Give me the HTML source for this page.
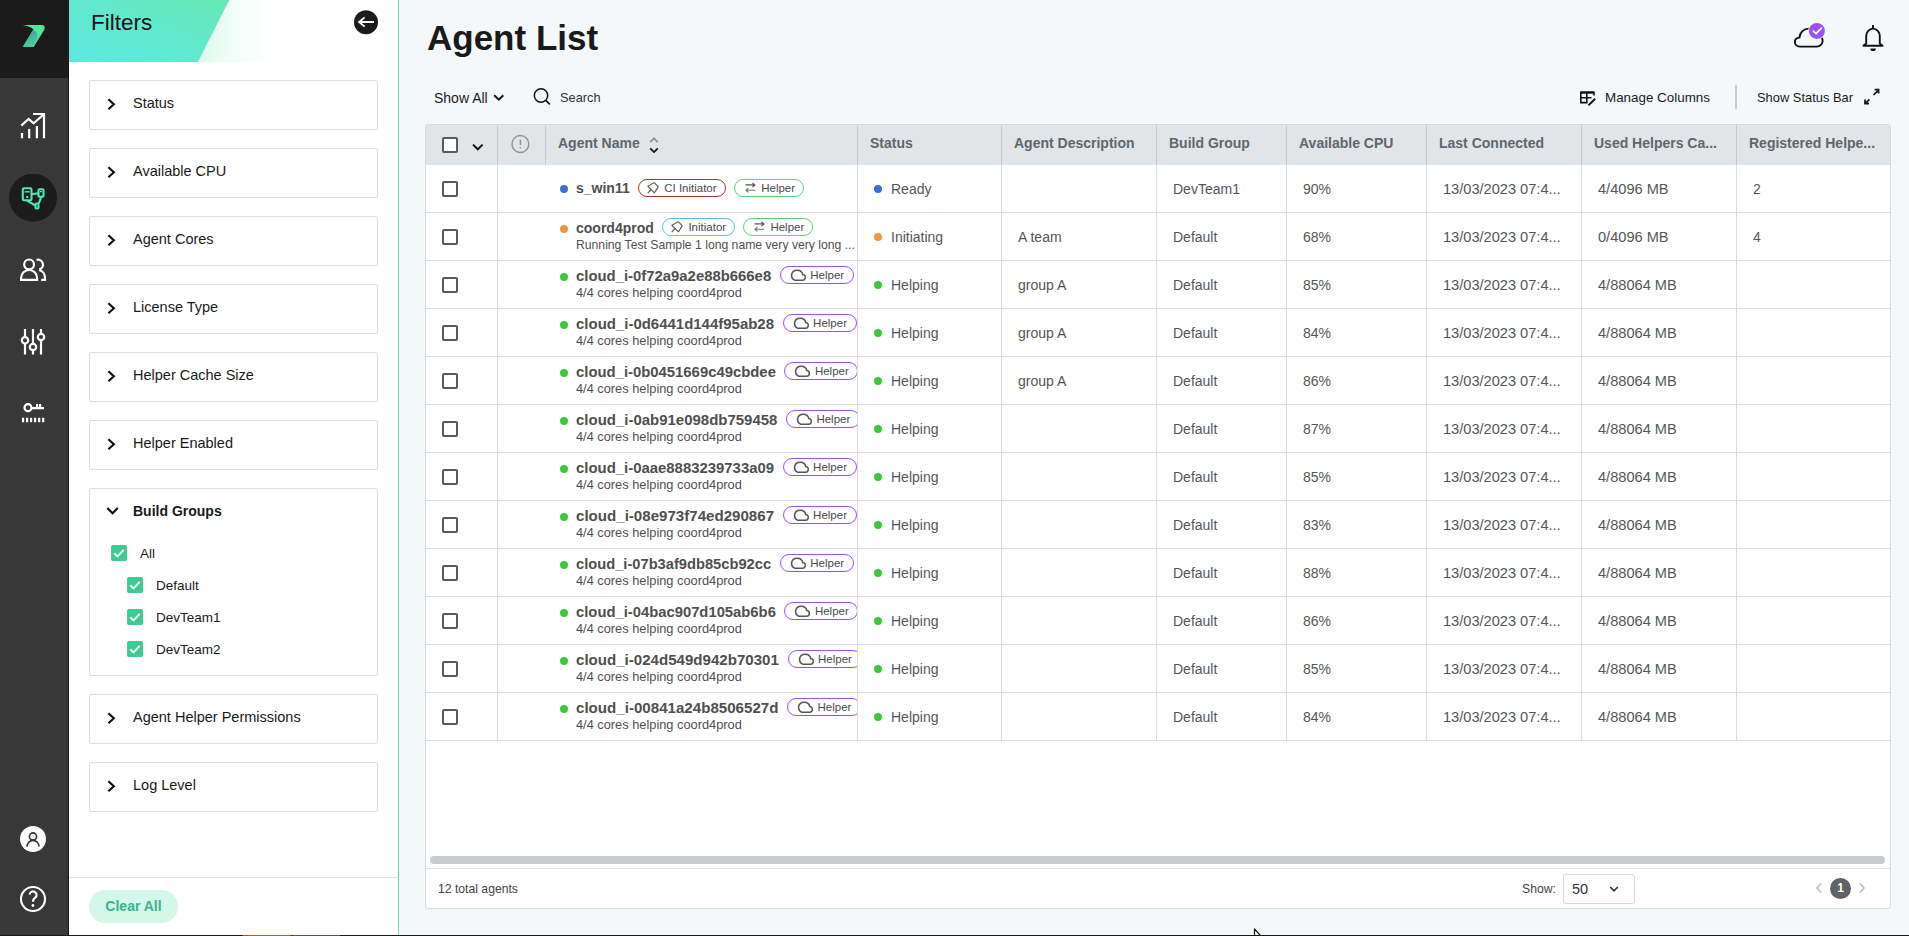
<!DOCTYPE html>
<html><head><meta charset="utf-8"><title>Agent List</title>
<style>
*{box-sizing:border-box}
html,body{margin:0;padding:0}
body{width:1909px;height:936px;overflow:hidden;position:relative;background:#f5f8f9;font-family:"Liberation Sans",sans-serif;color:#333}
.abs{position:absolute}
#nav{position:absolute;left:0;top:0;width:69px;height:936px;background:#383838}
#navtop{position:absolute;left:0;top:0;width:69px;height:78px;background:#1b1b1b}
#fp{position:absolute;left:69px;top:0;width:330px;height:936px;background:#fff;border-right:1px solid #5cdcaa}
#fhead{position:absolute;left:0;top:0;width:329px;height:62px;overflow:hidden}
.fbox{position:absolute;left:20px;width:289px;height:50px;border:1px solid #d9dfe4;border-radius:2px;background:#fff}
.fbox .chev{position:absolute;left:16px;top:16px}
.fl{position:absolute;left:43px;top:13px;font-size:14.5px;line-height:18px;color:#1a1a1a;white-space:nowrap}
.gcb{position:absolute;width:16px;height:16px;background:#3ecb98;border-radius:2px}
.gl{position:absolute;font-size:13.5px;line-height:16px;color:#1a1a1a;white-space:nowrap}
#title{position:absolute;left:427px;top:17px;font-size:35px;line-height:42px;font-weight:bold;color:#1a1a1a;white-space:nowrap}
#tbl{position:absolute;left:425px;top:124px;width:1466px;height:785px;background:#fff;border:1px solid #d5dadf;border-radius:3px;overflow:hidden}
#thead{position:absolute;left:0;top:0;width:1464px;height:40px;background:#e1e5e8}
.hd{position:absolute;top:0;width:1px;height:40px;background:#c4cacf}
.vd{position:absolute;top:40px;width:1px;height:576px;background:#d9dee2}
.ht{position:absolute;top:9px;font-size:14px;line-height:18px;font-weight:bold;color:#60666b;white-space:nowrap}
.row{position:absolute;left:0;width:1464px;height:48px;border-bottom:1px solid #d9dee2}
.cb{position:absolute;width:16px;height:16px;border:2px solid #555b5f;border-radius:2px;background:#fff}
.nc{position:absolute;left:72px;top:0;width:359px;height:47px;overflow:hidden}
.nmb{position:absolute;left:78px;line-height:20px;font-weight:bold;color:#4f4f4f;white-space:nowrap}
.dot{display:inline-block;position:absolute;width:8px;height:8px;border-radius:50%}
.tag{position:absolute;height:17.4px;border:1.2px solid;border-radius:9px;background:#fff}
.tag .ti{position:absolute;top:1.6px;line-height:0}
.tag .tt{position:absolute;top:1px;font-size:11.5px;line-height:15px;color:#4a4a4a;white-space:nowrap}
.sub{position:absolute;left:78px;width:281px;white-space:nowrap;overflow:hidden;font-size:12.8px;line-height:15px;color:#505050}
.sub b{font-weight:bold}
.cell{position:absolute;top:0;height:48px;padding-left:17px;font-size:14px;line-height:48px;color:#53575a;white-space:nowrap}
.dt{font-size:14.6px}
</style></head>
<body>
<div id="nav">
  <div class="abs" style="left:68px;top:0;width:1px;height:936px;background:#161616;z-index:2"></div>
  <div id="navtop">
    <svg class="abs" style="left:15px;top:18px" width="36" height="36" viewBox="0 0 36 36">
      <defs><linearGradient id="lg1" x1="0" y1="0" x2="0.3" y2="1"><stop offset="0" stop-color="#4f8fb0"/><stop offset="1" stop-color="#45cf9a"/></linearGradient></defs>
      <path d="M7.1 7.1 L27.2 7.1 Q30.6 7.6 29.4 11.4 L18.8 28.8 L7.9 28.8 L18.4 11.6 Q14.5 7.6 7.1 7.1 Z" fill="#4de89e"/>
      <path d="M18.4 11.6 Q22.6 14.2 22.4 19.2 L18.8 28.8 L7.9 28.8 Z" fill="url(#lg1)"/>
    </svg>
  </div>
  <svg class="abs" style="left:15px;top:108px" width="36" height="36" viewBox="0 0 36 36" fill="none" stroke="#fff" stroke-width="2.2">
    <path d="M7 30.2 V25 M14.2 30.2 V21 M21.9 30.2 V18 M29 30.2 V6 M18 6 H30 M6.3 17.6 L13.6 10.9 L18.6 15.3 L28.6 6.5"/>
  </svg>
  <svg class="abs" style="left:9px;top:174px" width="48" height="48" viewBox="0 0 48 48">
    <circle cx="24" cy="23.7" r="24" fill="#1c1c1c"/>
    <g transform="translate(6,6)" fill="none" stroke="#4ee8b0" stroke-width="2.1" stroke-linejoin="round">
      <rect x="7.8" y="8.3" width="8.7" height="12" rx="1.2"/>
      <rect x="23.5" y="9.2" width="5" height="7.6" rx="1"/>
      <rect x="20.5" y="23.5" width="3" height="5" rx="1"/>
      <path d="M16.5 14.3 L23.5 13.2 M12 20.6 L20.5 25.5 M26.2 17 L23.8 23.3"/>
      <path d="M9.6 11.8 H14.6" stroke-width="1.4"/>
      <rect x="11.2" y="16" width="2" height="2" fill="#4ee8b0" stroke="none"/>
      <path d="M25 11.6 H27" stroke-width="1.2"/>
    </g>
  </svg>
  <svg class="abs" style="left:15px;top:252px" width="36" height="36" viewBox="0 0 36 36" fill="none" stroke="#fff" stroke-width="2.2">
    <circle cx="14.1" cy="12.4" r="4.9"/>
    <path d="M6.1 27.8 V26 A8 8 0 0 1 22.1 26 V27.8 Z"/>
    <path d="M21.6 7.9 A4.8 4.8 0 0 1 24.2 17.6 M24.2 18 A7.4 8 0 0 1 30 26 V27.8 H26.2"/>
  </svg>
  <svg class="abs" style="left:15px;top:324px" width="36" height="36" viewBox="0 0 36 36" fill="none" stroke="#fff" stroke-width="2.2">
    <path d="M10 5 V13.1 M10 19.5 V30.6 M18 5 V19.8 M18 26.2 V30.6 M26 5 V9.9 M26 16.2 V30.6"/>
    <circle cx="10" cy="16.3" r="3.2"/><circle cx="18" cy="23" r="3.2"/><circle cx="26" cy="13" r="3.2"/>
  </svg>
  <svg class="abs" style="left:15px;top:396px" width="36" height="36" viewBox="0 0 36 36" fill="none" stroke="#fff" stroke-width="2.2">
    <circle cx="13" cy="11.7" r="3.5"/>
    <path d="M16.5 12.1 H29 M22.1 8 V12 M25.1 8 V12"/>
    <path d="M8.1 21.8 V26.2 M12.1 21.8 V26.2 M16.1 21.8 V26.2 M20.1 21.8 V26.2 M24.2 21.8 V26.2 M28.2 21.8 V26.2"/>
  </svg>
  <svg class="abs" style="left:15px;top:821px" width="36" height="36" viewBox="0 0 36 36">
    <circle cx="18" cy="18" r="13" fill="#fff"/>
    <g fill="none" stroke="#333" stroke-width="1.6"><circle cx="18" cy="15.5" r="3.6"/><path d="M12 25.6 A6 6.2 0 0 1 24 25.6"/></g>
  </svg>
  <svg class="abs" style="left:15px;top:881px" width="36" height="36" viewBox="0 0 36 36">
    <circle cx="18" cy="18" r="12" fill="none" stroke="#fff" stroke-width="2.1"/>
    <path d="M14.6 13.6 A3.5 3.4 0 1 1 20.2 16.6 Q18 18 18 20.8" fill="none" stroke="#fff" stroke-width="2.2"/>
    <circle cx="17.9" cy="24.5" r="1.4" fill="#fff"/>
  </svg>
</div>

<div id="fp">
  <div id="fhead">
    <div class="abs" style="left:0;top:0;width:210px;height:62px;background:linear-gradient(90deg,#d8f8eb 0%,#dcf9ee 60%,#f3fdf8 80%,#ffffff 100%)"></div>
    <svg class="abs" style="left:0;top:0" width="329" height="62" viewBox="0 0 329 62">
      <defs><linearGradient id="hg" x1="0" y1="1" x2="1" y2="0"><stop offset="0" stop-color="#5ee9e2"/><stop offset="0.55" stop-color="#62e8cc"/><stop offset="1" stop-color="#67e8b4"/></linearGradient></defs>
      <path d="M0 0 H160.2 L128.9 62 H0 Z" fill="url(#hg)"/>
    </svg>
    <div class="abs" style="left:22px;top:8px;font-size:22.5px;line-height:30px;color:#1c1414">Filters</div>
  </div>
  <svg class="abs" style="left:285px;top:10px" width="24" height="25" viewBox="0 0 24 25">
    <circle cx="12" cy="12.3" r="12" fill="#1c1c1c"/>
    <path d="M4.6 12 H20 M10.6 7.4 L5.2 12 L10.6 16.6" fill="none" stroke="#fff" stroke-width="1.9"/>
  </svg>
  <div class="fbox" style="top:80px"><svg class="chev" width="12" height="14" viewBox="0 0 12 14"><path d="M2.4 2.2 L7.8 7.3 L2.4 12.3" fill="none" stroke="#111" stroke-width="2.2"/></svg><span class="fl">Status</span></div><div class="fbox" style="top:148px"><svg class="chev" width="12" height="14" viewBox="0 0 12 14"><path d="M2.4 2.2 L7.8 7.3 L2.4 12.3" fill="none" stroke="#111" stroke-width="2.2"/></svg><span class="fl">Available CPU</span></div><div class="fbox" style="top:216px"><svg class="chev" width="12" height="14" viewBox="0 0 12 14"><path d="M2.4 2.2 L7.8 7.3 L2.4 12.3" fill="none" stroke="#111" stroke-width="2.2"/></svg><span class="fl">Agent Cores</span></div><div class="fbox" style="top:284px"><svg class="chev" width="12" height="14" viewBox="0 0 12 14"><path d="M2.4 2.2 L7.8 7.3 L2.4 12.3" fill="none" stroke="#111" stroke-width="2.2"/></svg><span class="fl">License Type</span></div><div class="fbox" style="top:352px"><svg class="chev" width="12" height="14" viewBox="0 0 12 14"><path d="M2.4 2.2 L7.8 7.3 L2.4 12.3" fill="none" stroke="#111" stroke-width="2.2"/></svg><span class="fl">Helper Cache Size</span></div><div class="fbox" style="top:420px"><svg class="chev" width="12" height="14" viewBox="0 0 12 14"><path d="M2.4 2.2 L7.8 7.3 L2.4 12.3" fill="none" stroke="#111" stroke-width="2.2"/></svg><span class="fl">Helper Enabled</span></div><div class="fbox" style="top:694px"><svg class="chev" width="12" height="14" viewBox="0 0 12 14"><path d="M2.4 2.2 L7.8 7.3 L2.4 12.3" fill="none" stroke="#111" stroke-width="2.2"/></svg><span class="fl">Agent Helper Permissions</span></div><div class="fbox" style="top:762px"><svg class="chev" width="12" height="14" viewBox="0 0 12 14"><path d="M2.4 2.2 L7.8 7.3 L2.4 12.3" fill="none" stroke="#111" stroke-width="2.2"/></svg><span class="fl">Log Level</span></div>
  <div class="fbox" style="top:488px;height:188px">
    <svg class="abs" style="left:16px;top:16px" width="14" height="12" viewBox="0 0 14 12"><path d="M1.3 3 L6.5 8.3 L11.8 3" fill="none" stroke="#111" stroke-width="2.2"/></svg>
    <span class="fl" style="font-weight:bold;font-size:14px">Build Groups</span>
  </div>
  <div class="gcb" style="left:42px;top:545px"><svg width="16" height="16" viewBox="0 0 16 16"><path d="M3.3 8.3 L6.5 11.4 L12.7 4.9" fill="none" stroke="#fff" stroke-width="1.8"/></svg></div>
  <div class="gl" style="left:71px;top:546px">All</div>
  <div class="gcb" style="left:58px;top:577px"><svg width="16" height="16" viewBox="0 0 16 16"><path d="M3.3 8.3 L6.5 11.4 L12.7 4.9" fill="none" stroke="#fff" stroke-width="1.8"/></svg></div>
  <div class="gl" style="left:87px;top:578px">Default</div>
  <div class="gcb" style="left:58px;top:609px"><svg width="16" height="16" viewBox="0 0 16 16"><path d="M3.3 8.3 L6.5 11.4 L12.7 4.9" fill="none" stroke="#fff" stroke-width="1.8"/></svg></div>
  <div class="gl" style="left:87px;top:610px">DevTeam1</div>
  <div class="gcb" style="left:58px;top:641px"><svg width="16" height="16" viewBox="0 0 16 16"><path d="M3.3 8.3 L6.5 11.4 L12.7 4.9" fill="none" stroke="#fff" stroke-width="1.8"/></svg></div>
  <div class="gl" style="left:87px;top:642px">DevTeam2</div>
  <div class="abs" style="left:0;top:877px;width:329px;height:1px;background:#dde2e6"></div>
  <div class="abs" style="left:20px;top:890px;width:89px;height:33px;border-radius:17px;background:#d3f7e9;color:#38b290;font-weight:bold;font-size:14px;line-height:33px;text-align:center">Clear All</div>
</div>

<div id="title">Agent List</div>
<svg class="abs" style="left:1788px;top:18px" width="42" height="36" viewBox="0 0 42 36">
  <path d="M11.8 28.6 C8.8 28.6 6.9 26.3 6.9 23.9 C6.9 21.5 8.8 19.8 11.4 19.6 C11.9 14.5 15.8 10.6 20.8 10.6 C25 10.6 28.5 13.3 29.6 17.2 C32.4 17.5 34.6 19.9 34.6 23 C34.6 26 32.1 28.6 29 28.6 Z" fill="none" stroke="#111" stroke-width="1.9"/>
  <circle cx="28.9" cy="12.9" r="8.6" fill="#f5f8f9"/>
  <circle cx="28.9" cy="12.9" r="8" fill="#9d52f5"/>
  <path d="M24.8 12.6 L28.1 15.6 L33.9 9.6" fill="none" stroke="#fff" stroke-width="1.6"/>
</svg>
<svg class="abs" style="left:1855px;top:18px" width="36" height="36" viewBox="0 0 36 36">
  <path d="M18 7 V10.4 M11.2 25.6 V18.2 A6.8 7.6 0 0 1 24.8 18.2 V25.6 L27.6 27.8 H8.4 Z" fill="none" stroke="#111" stroke-width="1.9" stroke-linejoin="round"/>
  <path d="M15.4 30.4 H20.8 A2.7 2.6 0 0 1 15.4 30.4 Z" fill="#111"/>
</svg>

<div class="abs" style="left:434px;top:89px;font-size:14px;line-height:18px;color:#1a1a1a">Show All</div>
<svg class="abs" style="left:490px;top:82px" width="70" height="30" viewBox="0 0 70 30">
  <path d="M4.2 13.2 L8.8 17.6 L13.3 13.2" fill="none" stroke="#111" stroke-width="1.9"/>
  <circle cx="51" cy="13.5" r="6.7" fill="none" stroke="#111" stroke-width="1.5"/>
  <path d="M55.9 18.4 L59.8 22.4" stroke="#111" stroke-width="1.6"/>
</svg>
<div class="abs" style="left:560px;top:88.5px;font-size:12.8px;line-height:18px;color:#333">Search</div>

<svg class="abs" style="left:1574px;top:82px" width="30" height="30" viewBox="0 0 30 30" fill="none" stroke="#111">
  <path d="M20 13.5 V10.2 H6.8 V20.6 H12.8 V10.2 M6.8 15.8 H17.5" stroke-width="1.6"/>
  <path d="M6.8 10.6 H20" stroke-width="2.2"/>
  <path d="M14.4 23.4 L21.2 16.8" stroke-width="2"/>
</svg>
<div class="abs" style="left:1605px;top:89px;font-size:13.4px;line-height:18px;color:#1a1a1a">Manage Columns</div>
<div class="abs" style="left:1735px;top:85px;width:2px;height:24px;background:#c5cbcf"></div>
<div class="abs" style="left:1757px;top:89px;font-size:12.9px;line-height:18px;color:#1a1a1a">Show Status Bar</div>
<svg class="abs" style="left:1856px;top:82px" width="30" height="30" viewBox="0 0 30 30" fill="none" stroke="#111" stroke-width="1.7">
  <path d="M17.6 13 L22.2 8.4 M18.6 7.6 H22.6 V11.6 M13.4 17.4 L9 21.8 M9 17.6 V21.6 H13"/>
</svg>

<div id="tbl">
  <div id="thead"><div class="hd" style="left:71px"></div><div class="hd" style="left:119px"></div><div class="hd" style="left:431px"></div><div class="hd" style="left:575px"></div><div class="hd" style="left:730px"></div><div class="hd" style="left:860px"></div><div class="hd" style="left:1000px"></div><div class="hd" style="left:1155px"></div><div class="hd" style="left:1310px"></div>
    <div class="cb" style="left:16px;top:12px;border-color:#555b5f"></div>
    <svg class="abs" style="left:45px;top:17px" width="14" height="10" viewBox="0 0 14 10"><path d="M2 2.6 L6.8 7.3 L11.6 2.6" fill="none" stroke="#111" stroke-width="1.9"/></svg>
    <svg class="abs" style="left:83px;top:8px" width="22" height="22" viewBox="0 0 22 22"><circle cx="11.4" cy="11" r="8.4" fill="none" stroke="#8f979d" stroke-width="1.5"/><path d="M11.4 6.6 V12" stroke="#8f979d" stroke-width="1.6"/><circle cx="11.4" cy="14.6" r="0.95" fill="#8f979d"/></svg>
    <div class="ht" style="left:132px">Agent Name</div><div class="ht" style="left:444px">Status</div><div class="ht" style="left:588px">Agent Description</div><div class="ht" style="left:743px">Build Group</div><div class="ht" style="left:873px">Available CPU</div><div class="ht" style="left:1013px">Last Connected</div><div class="ht" style="left:1168px">Used Helpers Ca...</div><div class="ht" style="left:1323px">Registered Helpe...</div>
    <svg class="abs" style="left:214px;top:5px" width="28" height="28" viewBox="0 0 28 28" fill="none" stroke-width="1.7"><path d="M10.2 12.2 L14 8.3 L17.8 12.2" stroke="#8a9399"/><path d="M10.2 18.3 L14 22 L17.8 18.3" stroke="#111"/></svg>
  </div>
  <div class="vd" style="left:71px"></div><div class="vd" style="left:431px"></div><div class="vd" style="left:575px"></div><div class="vd" style="left:730px"></div><div class="vd" style="left:860px"></div><div class="vd" style="left:1000px"></div><div class="vd" style="left:1155px"></div><div class="vd" style="left:1310px"></div>
  <div class="row" style="top:40px"><div class="cb" style="left:16px;top:16px"></div><div class="nc"><i class="dot" style="left:62px;top:20px;background:#3a6fd8"></i><b class="nmb" style="top:13.1px;font-size:14.0px">s_win11</b><div class="tag" style="left:140.2px;top:14.3px;width:88px;border-color:#a83a26"><span class="ti" style="left:8px"><svg width="12" height="12" viewBox="0 0 12 12"><path d="M0.9 4.3 L7.2 0.6 L11.3 4.6 L7.5 10.8 Z" fill="none" stroke="#555" stroke-width="1.1" stroke-linejoin="round"/><path d="M4.2 7.5 L0.7 11.1" stroke="#555" stroke-width="1.1"/></svg></span><span class="tt" style="left:25px">CI Initiator</span></div><div class="tag" style="left:236.2px;top:14.3px;width:70px;border-color:#5ad36e"><span class="ti" style="left:10px"><svg width="11" height="11" viewBox="0 0 12 12"><path d="M0.6 3.2 H10.6 M8.2 0.9 L10.7 3.2 L8.2 5.5" fill="none" stroke="#555" stroke-width="1.3"/><path d="M11.2 9 H1.2 M3.6 6.7 L1.1 9 L3.6 11.3" fill="none" stroke="#777" stroke-width="1.3"/></svg></span><span class="tt" style="left:26px">Helper</span></div></div><div class="cell" style="left:431px"><i class="dot" style="position:static;background:#3a6fd8;margin-right:9px;vertical-align:middle;margin-top:-2px"></i>Ready</div><div class="cell" style="left:730px">DevTeam1</div><div class="cell" style="left:860px">90%</div><div class="cell dt" style="left:1000px">13/03/2023 07:4...</div><div class="cell dt" style="left:1155px">4/4096 MB</div><div class="cell" style="left:1310px">2</div></div>
<div class="row" style="top:88px"><div class="cb" style="left:16px;top:16px"></div><div class="nc"><i class="dot" style="left:62px;top:12px;background:#f0953f"></i><b class="nmb" style="top:5.1px;font-size:14.02px">coord4prod</b><div class="tag" style="left:164.4px;top:5.4px;width:73px;border-color:#5bbfdf"><span class="ti" style="left:8px"><svg width="12" height="12" viewBox="0 0 12 12"><path d="M0.9 4.3 L7.2 0.6 L11.3 4.6 L7.5 10.8 Z" fill="none" stroke="#555" stroke-width="1.1" stroke-linejoin="round"/><path d="M4.2 7.5 L0.7 11.1" stroke="#555" stroke-width="1.1"/></svg></span><span class="tt" style="left:25px">Initiator</span></div><div class="tag" style="left:245.4px;top:5.4px;width:70px;border-color:#5ad36e"><span class="ti" style="left:10px"><svg width="11" height="11" viewBox="0 0 12 12"><path d="M0.6 3.2 H10.6 M8.2 0.9 L10.7 3.2 L8.2 5.5" fill="none" stroke="#555" stroke-width="1.3"/><path d="M11.2 9 H1.2 M3.6 6.7 L1.1 9 L3.6 11.3" fill="none" stroke="#777" stroke-width="1.3"/></svg></span><span class="tt" style="left:26px">Helper</span></div><div class="sub" style="top:25px;font-size:12.2px">Running Test Sample 1 long name very very long ...</div></div><div class="cell" style="left:431px"><i class="dot" style="position:static;background:#f0953f;margin-right:9px;vertical-align:middle;margin-top:-2px"></i>Initiating</div><div class="cell" style="left:575px">A team</div><div class="cell" style="left:730px">Default</div><div class="cell" style="left:860px">68%</div><div class="cell dt" style="left:1000px">13/03/2023 07:4...</div><div class="cell dt" style="left:1155px">0/4096 MB</div><div class="cell" style="left:1310px">4</div></div>
<div class="row" style="top:136px"><div class="cb" style="left:16px;top:16px"></div><div class="nc"><i class="dot" style="left:62px;top:12px;background:#3cc83c"></i><b class="nmb" style="top:5.1px;font-size:14.89px">cloud_i-0f72a9a2e88b666e8</b><div class="tag" style="left:281.8px;top:5.4px;width:74px;border-color:#9b4dff"><span class="ti" style="left:9px"><svg width="16" height="12" viewBox="0 0 16 12"><path d="M4.6 11.2 H12.2 A2.8 2.8 0 0 0 12.8 5.6 A5.7 5.4 0 0 0 1.6 5.6 A5.6 5.6 0 0 0 4.6 11.2 Z" fill="none" stroke="#555" stroke-width="1.5"/></svg></span><span class="tt" style="left:29.5px">Helper</span></div><div class="sub" style="top:24px">4/4 cores helping coord4prod</div></div><div class="cell" style="left:431px"><i class="dot" style="position:static;background:#3cc83c;margin-right:9px;vertical-align:middle;margin-top:-2px"></i>Helping</div><div class="cell" style="left:575px">group A</div><div class="cell" style="left:730px">Default</div><div class="cell" style="left:860px">85%</div><div class="cell dt" style="left:1000px">13/03/2023 07:4...</div><div class="cell dt" style="left:1155px">4/88064 MB</div></div>
<div class="row" style="top:184px"><div class="cb" style="left:16px;top:16px"></div><div class="nc"><i class="dot" style="left:62px;top:12px;background:#3cc83c"></i><b class="nmb" style="top:5.1px;font-size:14.98px">cloud_i-0d6441d144f95ab28</b><div class="tag" style="left:284.6px;top:5.4px;width:74px;border-color:#9b4dff"><span class="ti" style="left:9px"><svg width="16" height="12" viewBox="0 0 16 12"><path d="M4.6 11.2 H12.2 A2.8 2.8 0 0 0 12.8 5.6 A5.7 5.4 0 0 0 1.6 5.6 A5.6 5.6 0 0 0 4.6 11.2 Z" fill="none" stroke="#555" stroke-width="1.5"/></svg></span><span class="tt" style="left:29.5px">Helper</span></div><div class="sub" style="top:24px">4/4 cores helping coord4prod</div></div><div class="cell" style="left:431px"><i class="dot" style="position:static;background:#3cc83c;margin-right:9px;vertical-align:middle;margin-top:-2px"></i>Helping</div><div class="cell" style="left:575px">group A</div><div class="cell" style="left:730px">Default</div><div class="cell" style="left:860px">84%</div><div class="cell dt" style="left:1000px">13/03/2023 07:4...</div><div class="cell dt" style="left:1155px">4/88064 MB</div></div>
<div class="row" style="top:232px"><div class="cb" style="left:16px;top:16px"></div><div class="nc"><i class="dot" style="left:62px;top:12px;background:#3cc83c"></i><b class="nmb" style="top:5.1px;font-size:14.86px">cloud_i-0b0451669c49cbdee</b><div class="tag" style="left:286.4px;top:5.4px;width:74px;border-color:#9b4dff"><span class="ti" style="left:9px"><svg width="16" height="12" viewBox="0 0 16 12"><path d="M4.6 11.2 H12.2 A2.8 2.8 0 0 0 12.8 5.6 A5.7 5.4 0 0 0 1.6 5.6 A5.6 5.6 0 0 0 4.6 11.2 Z" fill="none" stroke="#555" stroke-width="1.5"/></svg></span><span class="tt" style="left:29.5px">Helper</span></div><div class="sub" style="top:24px">4/4 cores helping coord4prod</div></div><div class="cell" style="left:431px"><i class="dot" style="position:static;background:#3cc83c;margin-right:9px;vertical-align:middle;margin-top:-2px"></i>Helping</div><div class="cell" style="left:575px">group A</div><div class="cell" style="left:730px">Default</div><div class="cell" style="left:860px">86%</div><div class="cell dt" style="left:1000px">13/03/2023 07:4...</div><div class="cell dt" style="left:1155px">4/88064 MB</div></div>
<div class="row" style="top:280px"><div class="cb" style="left:16px;top:16px"></div><div class="nc"><i class="dot" style="left:62px;top:12px;background:#3cc83c"></i><b class="nmb" style="top:5.1px;font-size:14.97px">cloud_i-0ab91e098db759458</b><div class="tag" style="left:287.9px;top:5.4px;width:74px;border-color:#9b4dff"><span class="ti" style="left:9px"><svg width="16" height="12" viewBox="0 0 16 12"><path d="M4.6 11.2 H12.2 A2.8 2.8 0 0 0 12.8 5.6 A5.7 5.4 0 0 0 1.6 5.6 A5.6 5.6 0 0 0 4.6 11.2 Z" fill="none" stroke="#555" stroke-width="1.5"/></svg></span><span class="tt" style="left:29.5px">Helper</span></div><div class="sub" style="top:24px">4/4 cores helping coord4prod</div></div><div class="cell" style="left:431px"><i class="dot" style="position:static;background:#3cc83c;margin-right:9px;vertical-align:middle;margin-top:-2px"></i>Helping</div><div class="cell" style="left:730px">Default</div><div class="cell" style="left:860px">87%</div><div class="cell dt" style="left:1000px">13/03/2023 07:4...</div><div class="cell dt" style="left:1155px">4/88064 MB</div></div>
<div class="row" style="top:328px"><div class="cb" style="left:16px;top:16px"></div><div class="nc"><i class="dot" style="left:62px;top:12px;background:#3cc83c"></i><b class="nmb" style="top:5.1px;font-size:14.91px">cloud_i-0aae8883239733a09</b><div class="tag" style="left:284.6px;top:5.4px;width:74px;border-color:#9b4dff"><span class="ti" style="left:9px"><svg width="16" height="12" viewBox="0 0 16 12"><path d="M4.6 11.2 H12.2 A2.8 2.8 0 0 0 12.8 5.6 A5.7 5.4 0 0 0 1.6 5.6 A5.6 5.6 0 0 0 4.6 11.2 Z" fill="none" stroke="#555" stroke-width="1.5"/></svg></span><span class="tt" style="left:29.5px">Helper</span></div><div class="sub" style="top:24px">4/4 cores helping coord4prod</div></div><div class="cell" style="left:431px"><i class="dot" style="position:static;background:#3cc83c;margin-right:9px;vertical-align:middle;margin-top:-2px"></i>Helping</div><div class="cell" style="left:730px">Default</div><div class="cell" style="left:860px">85%</div><div class="cell dt" style="left:1000px">13/03/2023 07:4...</div><div class="cell dt" style="left:1155px">4/88064 MB</div></div>
<div class="row" style="top:376px"><div class="cb" style="left:16px;top:16px"></div><div class="nc"><i class="dot" style="left:62px;top:12px;background:#3cc83c"></i><b class="nmb" style="top:5.1px;font-size:15.1px">cloud_i-08e973f74ed290867</b><div class="tag" style="left:284.6px;top:5.4px;width:74px;border-color:#9b4dff"><span class="ti" style="left:9px"><svg width="16" height="12" viewBox="0 0 16 12"><path d="M4.6 11.2 H12.2 A2.8 2.8 0 0 0 12.8 5.6 A5.7 5.4 0 0 0 1.6 5.6 A5.6 5.6 0 0 0 4.6 11.2 Z" fill="none" stroke="#555" stroke-width="1.5"/></svg></span><span class="tt" style="left:29.5px">Helper</span></div><div class="sub" style="top:24px">4/4 cores helping coord4prod</div></div><div class="cell" style="left:431px"><i class="dot" style="position:static;background:#3cc83c;margin-right:9px;vertical-align:middle;margin-top:-2px"></i>Helping</div><div class="cell" style="left:730px">Default</div><div class="cell" style="left:860px">83%</div><div class="cell dt" style="left:1000px">13/03/2023 07:4...</div><div class="cell dt" style="left:1155px">4/88064 MB</div></div>
<div class="row" style="top:424px"><div class="cb" style="left:16px;top:16px"></div><div class="nc"><i class="dot" style="left:62px;top:12px;background:#3cc83c"></i><b class="nmb" style="top:5.1px;font-size:14.7px">cloud_i-07b3af9db85cb92cc</b><div class="tag" style="left:281.8px;top:5.4px;width:74px;border-color:#9b4dff"><span class="ti" style="left:9px"><svg width="16" height="12" viewBox="0 0 16 12"><path d="M4.6 11.2 H12.2 A2.8 2.8 0 0 0 12.8 5.6 A5.7 5.4 0 0 0 1.6 5.6 A5.6 5.6 0 0 0 4.6 11.2 Z" fill="none" stroke="#555" stroke-width="1.5"/></svg></span><span class="tt" style="left:29.5px">Helper</span></div><div class="sub" style="top:24px">4/4 cores helping coord4prod</div></div><div class="cell" style="left:431px"><i class="dot" style="position:static;background:#3cc83c;margin-right:9px;vertical-align:middle;margin-top:-2px"></i>Helping</div><div class="cell" style="left:730px">Default</div><div class="cell" style="left:860px">88%</div><div class="cell dt" style="left:1000px">13/03/2023 07:4...</div><div class="cell dt" style="left:1155px">4/88064 MB</div></div>
<div class="row" style="top:472px"><div class="cb" style="left:16px;top:16px"></div><div class="nc"><i class="dot" style="left:62px;top:12px;background:#3cc83c"></i><b class="nmb" style="top:5.1px;font-size:14.8px">cloud_i-04bac907d105ab6b6</b><div class="tag" style="left:286.4px;top:5.4px;width:74px;border-color:#9b4dff"><span class="ti" style="left:9px"><svg width="16" height="12" viewBox="0 0 16 12"><path d="M4.6 11.2 H12.2 A2.8 2.8 0 0 0 12.8 5.6 A5.7 5.4 0 0 0 1.6 5.6 A5.6 5.6 0 0 0 4.6 11.2 Z" fill="none" stroke="#555" stroke-width="1.5"/></svg></span><span class="tt" style="left:29.5px">Helper</span></div><div class="sub" style="top:24px">4/4 cores helping coord4prod</div></div><div class="cell" style="left:431px"><i class="dot" style="position:static;background:#3cc83c;margin-right:9px;vertical-align:middle;margin-top:-2px"></i>Helping</div><div class="cell" style="left:730px">Default</div><div class="cell" style="left:860px">86%</div><div class="cell dt" style="left:1000px">13/03/2023 07:4...</div><div class="cell dt" style="left:1155px">4/88064 MB</div></div>
<div class="row" style="top:520px"><div class="cb" style="left:16px;top:16px"></div><div class="nc"><i class="dot" style="left:62px;top:12px;background:#3cc83c"></i><b class="nmb" style="top:5.1px;font-size:15.09px">cloud_i-024d549d942b70301</b><div class="tag" style="left:289.5px;top:5.4px;width:74px;border-color:#9b4dff"><span class="ti" style="left:9px"><svg width="16" height="12" viewBox="0 0 16 12"><path d="M4.6 11.2 H12.2 A2.8 2.8 0 0 0 12.8 5.6 A5.7 5.4 0 0 0 1.6 5.6 A5.6 5.6 0 0 0 4.6 11.2 Z" fill="none" stroke="#555" stroke-width="1.5"/></svg></span><span class="tt" style="left:29.5px">Helper</span></div><div class="sub" style="top:24px">4/4 cores helping coord4prod</div></div><div class="cell" style="left:431px"><i class="dot" style="position:static;background:#3cc83c;margin-right:9px;vertical-align:middle;margin-top:-2px"></i>Helping</div><div class="cell" style="left:730px">Default</div><div class="cell" style="left:860px">85%</div><div class="cell dt" style="left:1000px">13/03/2023 07:4...</div><div class="cell dt" style="left:1155px">4/88064 MB</div></div>
<div class="row" style="top:568px"><div class="cb" style="left:16px;top:16px"></div><div class="nc"><i class="dot" style="left:62px;top:12px;background:#3cc83c"></i><b class="nmb" style="top:5.1px;font-size:15.12px">cloud_i-00841a24b8506527d</b><div class="tag" style="left:289.0px;top:5.4px;width:74px;border-color:#9b4dff"><span class="ti" style="left:9px"><svg width="16" height="12" viewBox="0 0 16 12"><path d="M4.6 11.2 H12.2 A2.8 2.8 0 0 0 12.8 5.6 A5.7 5.4 0 0 0 1.6 5.6 A5.6 5.6 0 0 0 4.6 11.2 Z" fill="none" stroke="#555" stroke-width="1.5"/></svg></span><span class="tt" style="left:29.5px">Helper</span></div><div class="sub" style="top:24px">4/4 cores helping coord4prod</div></div><div class="cell" style="left:431px"><i class="dot" style="position:static;background:#3cc83c;margin-right:9px;vertical-align:middle;margin-top:-2px"></i>Helping</div><div class="cell" style="left:730px">Default</div><div class="cell" style="left:860px">84%</div><div class="cell dt" style="left:1000px">13/03/2023 07:4...</div><div class="cell dt" style="left:1155px">4/88064 MB</div></div>
  <div class="abs" style="left:4px;top:731px;width:1455px;height:8px;border-radius:4px;background:#c8cccf"></div>
  <div class="abs" style="left:0;top:743px;width:1464px;height:1px;background:#dde2e6"></div>
  <div class="abs" style="left:12px;top:755px;font-size:12.2px;line-height:18px;color:#444">12 total agents</div>
  <div class="abs" style="left:1096px;top:755px;font-size:12.2px;line-height:18px;color:#444">Show:</div>
  <div class="abs" style="left:1137px;top:749px;width:72px;height:30px;border:1px solid #d5dadf;border-radius:3px;background:#fff"></div>
  <div class="abs" style="left:1146px;top:754px;font-size:14.5px;line-height:20px;color:#333">50</div>
  <svg class="abs" style="left:1181px;top:757px" width="14" height="14" viewBox="0 0 14 14"><path d="M3.2 5 L7 8.8 L10.8 5" fill="none" stroke="#333" stroke-width="1.7"/></svg>
  <svg class="abs" style="left:1388px;top:755px" width="10" height="16" viewBox="0 0 10 16"><path d="M7 3.5 L3 8 L7 12.5" fill="none" stroke="#b8bdc1" stroke-width="1.5"/></svg>
  <div class="abs" style="left:1404px;top:753px;width:21px;height:21px;border-radius:50%;background:#5f6366;color:#fff;font-size:12px;font-weight:bold;line-height:21px;text-align:center">1</div>
  <svg class="abs" style="left:1431px;top:755px" width="10" height="16" viewBox="0 0 10 16"><path d="M3 3.5 L7 8 L3 12.5" fill="none" stroke="#b8bdc1" stroke-width="1.5"/></svg>
</div>

<svg class="abs" style="left:1252px;top:927px" width="12" height="10" viewBox="0 0 12 10"><path d="M2.5 2 L2.5 10 L9.8 10 Z" fill="#fff" stroke="#111" stroke-width="1.2" stroke-linejoin="round"/></svg>
<div class="abs" style="left:0;top:935px;width:1909px;height:1px;background:#1a1a1a"></div>
<div class="abs" style="left:243px;top:935px;width:48px;height:1px;background:#b85a1a"></div>
<div class="abs" style="left:292px;top:935px;width:48px;height:1px;background:#555"></div>
</body></html>
